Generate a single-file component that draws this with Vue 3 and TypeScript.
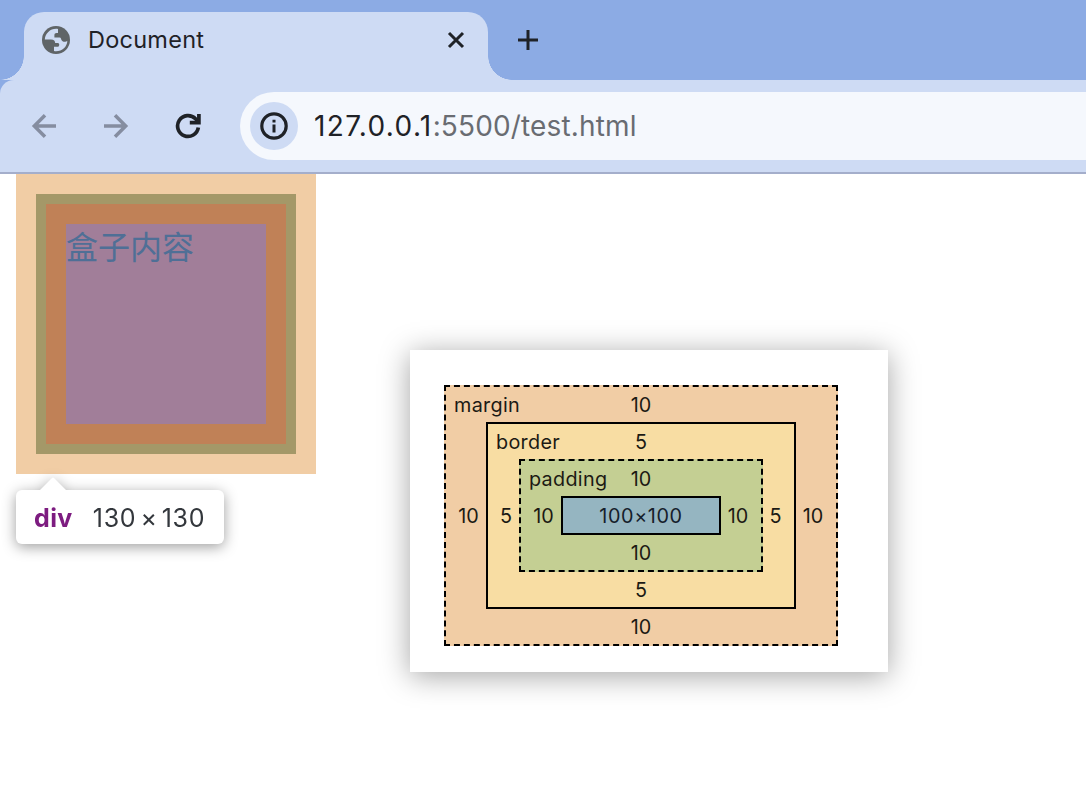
<script setup lang="ts">
interface Ring {
  name: string
  size: string
}

const rings: Record<'margin' | 'border' | 'padding', Ring> = {
  margin: { name: 'margin', size: '10' },
  border: { name: 'border', size: '5' },
  padding: { name: 'padding', size: '10' },
}
</script>

<template>
  <div class="window">
    <header class="chrome">
      <div class="tabstrip">
        <div class="tab">
          <svg class="globe" viewBox="0 0 28 28">
            <circle cx="14" cy="14" r="14" fill="#5f6467" />
            <path d="M16 2.900C9 1.800 3.200 7 2.800 13.500H9C12 13.500 13.200 15.200 13.200 17H15.800C17.800 17 17.800 20.800 15.500 20.800H12V25.100C19 26.300 25.300 21.200 25.300 14.700C24 16.200 21 16.200 19.800 14.600C19 13.400 19.300 11.400 17.500 11.400H12.400V9.300C12.400 7.800 13.200 7 14.600 7H16Z" fill="#cedbf4" />
          </svg>
          <span class="title">Document</span>
          <svg class="close" viewBox="0 0 18 18"><path d="M2 2L16 16M16 2L2 16" /></svg>
        </div>
        <svg class="plus" viewBox="0 0 20 20"><path d="M10 0V20M0 10H20" /></svg>
      </div>
      <div class="toolbar">
        <svg class="nav back" viewBox="0 0 26 26"><path d="M25 13H3.500M14 2.300L3.300 13L14 23.700" /></svg>
        <svg class="nav forward" viewBox="0 0 26 26"><path d="M1 13H22.500M12 2.300L22.700 13L12 23.700" /></svg>
        <svg class="reload" viewBox="0 0 26 26">
          <path d="M23.300 14.500A10.400 10.400 0 1 1 20.500 5.800L23 8.500" /><path d="M23.900 1V9.600H14.800" />
        </svg>
        <div class="address">
          <span class="info">
            <svg viewBox="0 0 28 28">
              <circle cx="14" cy="14" r="12.200" fill="none" stroke="#1f2227" stroke-width="3.200" />
              <path d="M12.500 12.500H15.500V20.500H12.500ZM12.500 7.700H15.500V10.500H12.500Z" fill="#1f2227" />
            </svg>
          </span>
          <span class="url"><span class="host">127.0.0.1</span>:5500/test.html</span>
        </div>
      </div>
    </header>

    <main class="page">
      <section class="inspected">
        <div class="outer"><div class="edge"><div class="content">盒子内容</div></div></div>
        <div class="tip">
          <svg class="arrow" viewBox="0 0 28 14"><path d="M0 14L13 1Q14 0 15 1L28 14Z" /></svg>
          <b>div</b><span class="dims">130<i>×</i>130</span>
        </div>
      </section>

      <section class="card">
        <div class="ring margin">
          <span class="name">{{ rings.margin.name }}</span>
          <span class="top">{{ rings.margin.size }}</span>
          <span class="left">{{ rings.margin.size }}</span>
          <div class="ring border">
            <span class="name">{{ rings.border.name }}</span>
            <span class="top">{{ rings.border.size }}</span>
            <span class="left">{{ rings.border.size }}</span>
            <div class="ring padding">
              <span class="name">{{ rings.padding.name }}</span>
              <span class="top">{{ rings.padding.size }}</span>
              <span class="left">{{ rings.padding.size }}</span>
              <div class="core">100×100</div>
              <span class="right">{{ rings.padding.size }}</span>
              <span class="bottom">{{ rings.padding.size }}</span>
            </div>
            <span class="right">{{ rings.border.size }}</span>
            <span class="bottom">{{ rings.border.size }}</span>
          </div>
          <span class="right">{{ rings.margin.size }}</span>
          <span class="bottom">{{ rings.margin.size }}</span>
        </div>
      </section>
    </main>
  </div>
</template>

<style>
html,
body {
  margin: 0;
  background: #fff;
  overflow: hidden;
}
</style>

<style scoped>
.window {
  width: 1086px;
  height: 786px;
  overflow: hidden;
  background: #fff;
  font-family: Inter, "Liberation Sans", "Noto Sans CJK SC", sans-serif;
}
.chrome {
  box-sizing: border-box;
  height: 174px;
  background: #8cabe4;
  border-bottom: 2px solid #a4aecb;
}
.tabstrip {
  height: 80px;
  display: flex;
  align-items: flex-start;
  padding-left: 24px;
  box-sizing: border-box;
}
.tab {
  position: relative;
  box-sizing: border-box;
  width: 464px;
  height: 68px;
  margin-top: 12px;
  padding: 0 23px 12px 18px;
  display: flex;
  align-items: center;
  background: #cedbf4;
  border-radius: 20px 20px 0 0;
}
.tab::before,
.tab::after {
  content: "";
  position: absolute;
  bottom: 0;
  width: 24px;
  height: 24px;
}
.tab::before {
  left: -24px;
  background: radial-gradient(circle at 0 0, transparent 23.5px, #cedbf4 24px);
}
.tab::after {
  right: -24px;
  background: radial-gradient(circle at 100% 0, transparent 23.5px, #cedbf4 24px);
}
.globe {
  width: 28px;
  height: 28px;
  margin-right: 18px;
}
.title {
  flex: 1;
  font-size: 23.500px;
  letter-spacing: 0.25px;
  line-height: 28px;
  color: #1f2227;
}
.close {
  width: 18px;
  height: 18px;
}
.close path,
.plus path {
  fill: none;
  stroke: #1f2227;
  stroke-width: 3;
}
.plus {
  width: 20px;
  height: 20px;
  margin: 30px 0 0 30px;
}
.toolbar {
  height: 92px;
  box-sizing: border-box;
  display: flex;
  align-items: center;
  padding-left: 31px;
  background: #cedbf4;
  border-top-left-radius: 14px;
}
.nav {
  width: 26px;
  height: 26px;
}
.nav path,
.reload path {
  fill: none;
  stroke: #858da0;
  stroke-width: 3.500;
}
.forward {
  margin-left: 46px;
}
.reload {
  width: 26px;
  height: 26px;
  margin-left: 46px;
}
.reload path {
  stroke: #1f2227;
  stroke-width: 3.700;
}
.address {
  flex: 1;
  height: 68px;
  margin-left: 39px;
  padding-left: 10px;
  box-sizing: border-box;
  display: flex;
  align-items: center;
  background: #f5f8fd;
  border-radius: 34px 0 0 34px;
}
.info {
  width: 48px;
  height: 48px;
  display: grid;
  place-items: center;
  border-radius: 50%;
  background: #cedbf4;
}
.info svg {
  width: 28px;
  height: 28px;
}
.url {
  margin-left: 16px;
  font-size: 28px;
  letter-spacing: 0.150px;
  line-height: 34px;
  color: #696c72;
}
.host {
  letter-spacing: 1.350px;
  color: #1f2227;
}
.page {
  display: flex;
  align-items: flex-start;
  padding-left: 16px;
}
.inspected {
  width: 300px;
}
.outer {
  padding: 20px;
  background: #f1cda5;
}
.edge {
  border: 10px solid #a49868;
  padding: 20px;
  background: #c08157;
}
.content {
  width: 200px;
  height: 200px;
  background: #a17e99;
  color: #4f6f96;
  font-family: "Noto Sans CJK SC", sans-serif;
  font-size: 32px;
  line-height: 42px;
}
.tip {
  position: relative;
  box-sizing: border-box;
  width: 208px;
  height: 54px;
  margin-top: 16px;
  padding: 2px 0 0 18px;
  display: flex;
  align-items: center;
  background: #fff;
  border-radius: 6px;
  filter: drop-shadow(0 3px 7px rgba(0, 0, 0, 0.38));
  font-size: 25px;
}
.arrow {
  position: absolute;
  left: 23px;
  top: -13px;
  width: 28px;
  height: 14px;
  fill: #fff;
}
.tip b {
  letter-spacing: 0.4px;
  color: #7d1c80;
}
.dims {
  margin-left: 20px;
  letter-spacing: 0.75px;
  color: #33373c;
}
.dims i {
  font-style: normal;
  margin: 0 4px;
}
.card {
  box-sizing: border-box;
  width: 478px;
  height: 322px;
  margin: 176px 0 0 94px;
  padding: 35px 0 0 34px;
  background: #fff;
  box-shadow: 0 4px 28px rgba(0, 0, 0, 0.36);
}
.ring {
  position: relative;
  box-sizing: border-box;
  display: grid;
  grid-template-rows: 35px 1fr 35px;
  grid-template-columns: 40px 1fr 40px;
  align-items: center;
  text-align: center;
  border: 2px dashed #000;
  font-size: 19.800px;
  line-height: 24px;
  color: #1c1a14;
}
.margin {
  width: 394px;
  height: 261px;
  background: #f1cda5;
}
.border {
  grid-template-columns: 31px 1fr 31px;
  border-style: solid;
  background: #f8dda3;
}
.padding {
  background: #c4cf93;
}
.ring > .ring,
.core {
  grid-area: 2 / 2;
  align-self: stretch;
}
.name {
  position: absolute;
  left: 8px;
  top: 6px;
  letter-spacing: 0.3px;
}
.top {
  grid-area: 1 / 2;
}
.bottom {
  grid-area: 3 / 2;
}
.left {
  grid-area: 2 / 1;
  padding-left: 5px;
}
.right {
  grid-area: 2 / 3;
  padding-right: 6px;
}
.core {
  border: 2px solid #000;
  line-height: 37px;
  height: 35px;
  letter-spacing: 0.6px;
  background: #95b5c1;
  color: #15202b;
}
</style>
